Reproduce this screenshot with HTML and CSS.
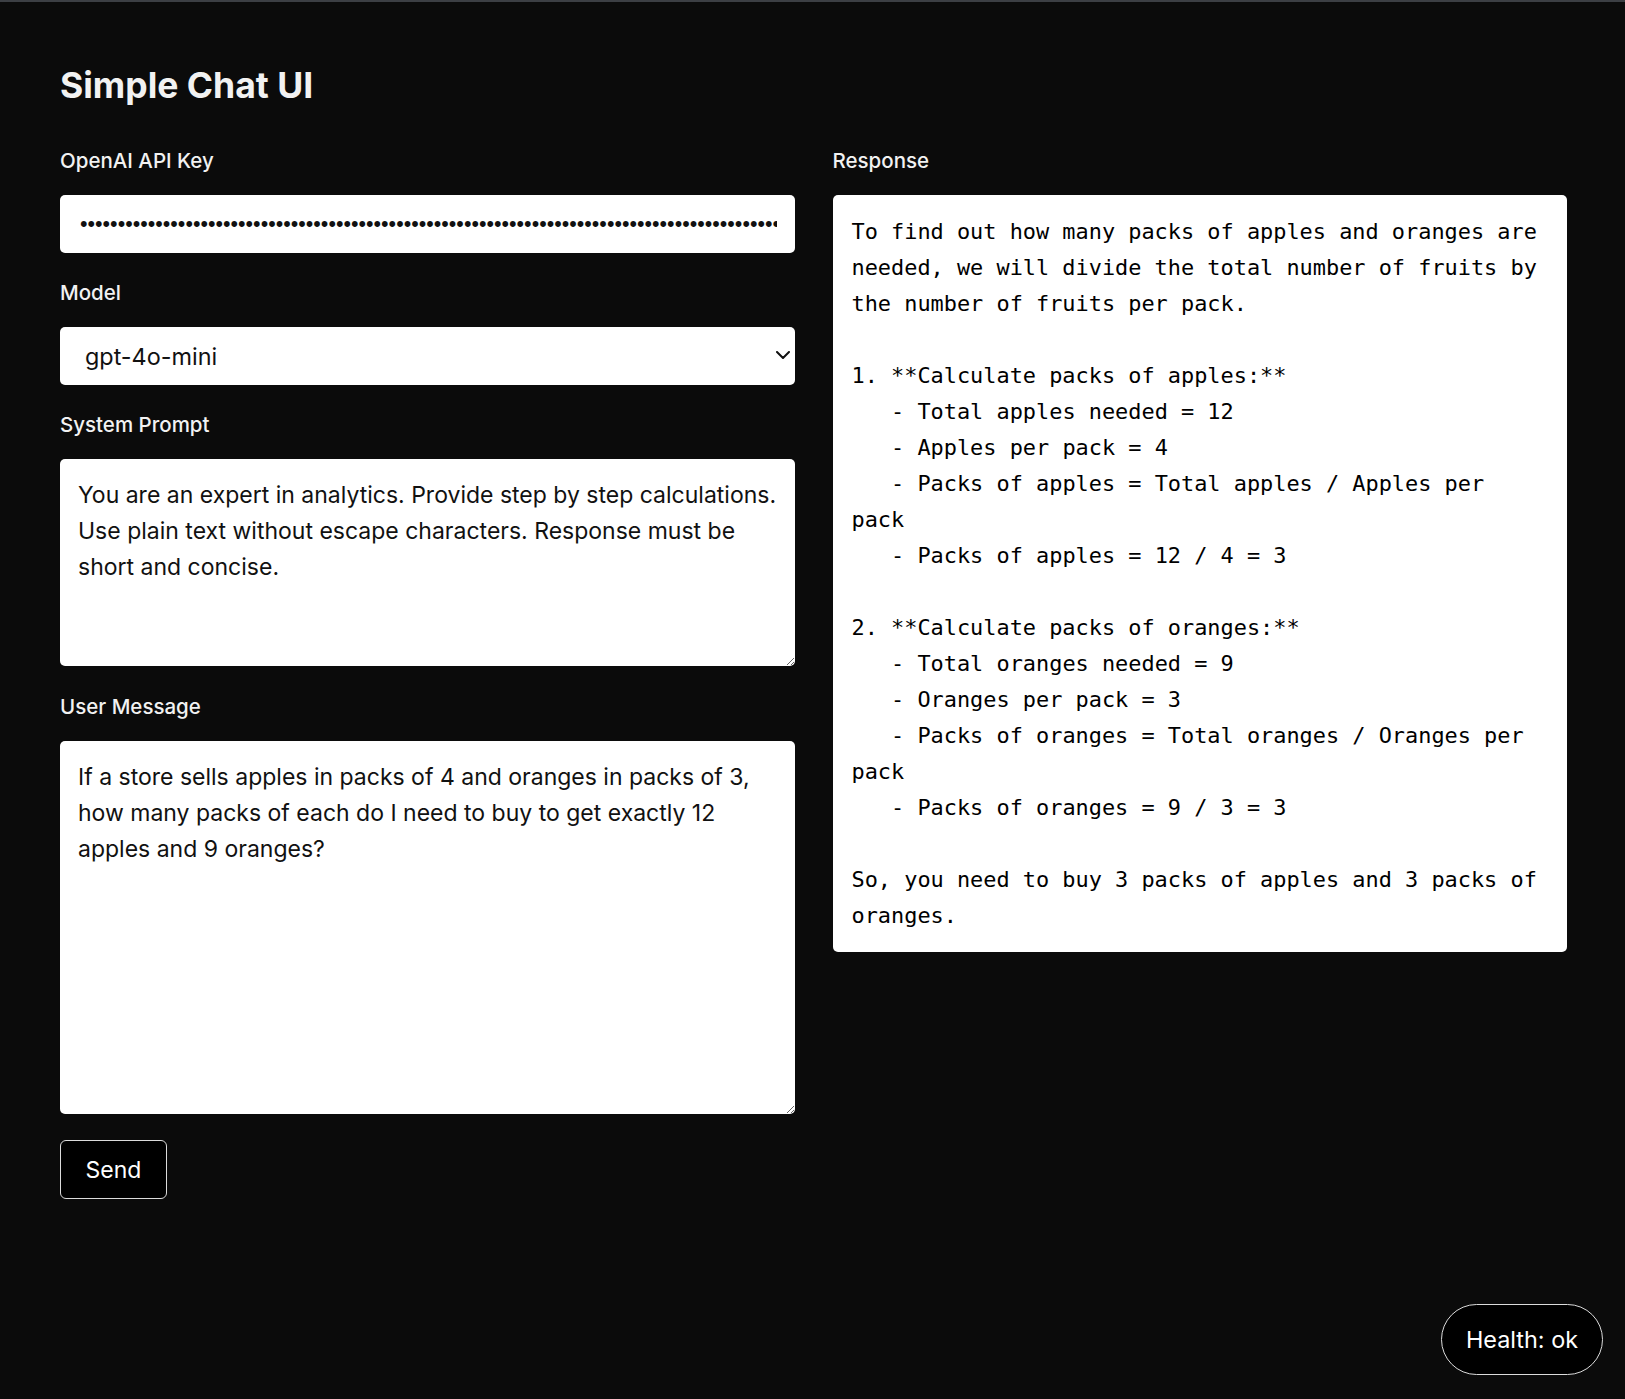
FILE: index.html
```html
<!DOCTYPE html>
<html lang="en">
<head>
<meta charset="utf-8">
<title>Simple Chat UI</title>
<link rel="stylesheet" href="styles.css">
</head>
<body>
<div class="topbar"></div>
<main class="page">
  <h1 class="title">Simple Chat UI</h1>
  <div class="columns">
    <section class="form">
      <label class="label" for="key">OpenAI API Key</label>
      <input class="field input" id="key" type="password" value="sk-proj-aaaaaaaaaaaaaaaaaaaaaaaaaaaaaaaaaaaaaaaaaaaaaaaaaaaaaaaaaaaaaaaaaaaaaaaaaaaaaaaaaaaaaaaaaaaaaaaaaaaaaaaaaaaaaaaaaaaaaaaa">
      <label class="label" for="model">Model</label>
      <div class="select-wrap">
        <select class="field select" id="model">
          <option>gpt-4o-mini</option>
          <option>gpt-4o</option>
        </select>
        <svg class="chevron" width="14" height="8" viewBox="0 0 14 8" aria-hidden="true">
          <path d="M1 1 L7 7 L13 1" fill="none" stroke="#111111" stroke-width="2" stroke-linecap="round" stroke-linejoin="round"/>
        </svg>
      </div>
      <label class="label" for="sys">System Prompt</label>
      <textarea class="field area area-sys" id="sys">You are an expert in analytics. Provide step by step calculations. Use plain text without escape characters. Response must be short and concise.</textarea>
      <label class="label" for="msg">User Message</label>
      <textarea class="field area area-msg" id="msg">If a store sells apples in packs of 4 and oranges in packs of 3, how many packs of each do I need to buy to get exactly 12 apples and 9 oranges?</textarea>
      <div class="actions"><button class="send" type="button">Send</button></div>
    </section>
    <section class="result">
      <div class="label">Response</div>
      <div class="response">To find out how many packs of apples and oranges are needed, we will divide the total number of fruits by the number of fruits per pack.

1. **Calculate packs of apples:**
   - Total apples needed = 12
   - Apples per pack = 4
   - Packs of apples = Total apples / Apples per pack
   - Packs of apples = 12 / 4 = 3

2. **Calculate packs of oranges:**
   - Total oranges needed = 9
   - Oranges per pack = 3
   - Packs of oranges = Total oranges / Oranges per pack
   - Packs of oranges = 9 / 3 = 3

So, you need to buy 3 packs of apples and 3 packs of oranges.</div>
    </section>
  </div>
</main>
<div class="health">Health: ok</div>
</body>
</html>
```
FILE: styles.css
```css
html, body {
  margin: 0;
  padding: 0;
}
body {
  background: #0b0b0b;
  color: #f2f2f2;
  font-family: Inter, "Liberation Sans", Arial, sans-serif;
  min-height: 1399px;
}
.topbar {
  height: 2px;
  background: #3c3f44;
}
.page {
  padding: 63px 58px 0 60px;
}
.title {
  margin: 0;
  font-size: 35.5px;
  line-height: 42px;
  font-weight: 700;
  color: #f2f2f2;
}
.columns {
  display: grid;
  grid-template-columns: 1fr 1fr;
  column-gap: 38px;
  margin-top: 42px;
  align-items: start;
}
.form {
  display: flex;
  flex-direction: column;
}
.label {
  display: block;
  font-size: 20.5px;
  line-height: 24px;
  font-weight: 500;
  color: #f2f2f2;
  margin-bottom: 22px;
}
.field {
  display: block;
  box-sizing: border-box;
  width: 100%;
  border: none;
  border-radius: 5px;
  background: #ffffff;
  color: #111111;
  font-family: Inter, "Liberation Sans", Arial, sans-serif;
  margin: 0 0 27px 0;
  outline: none;
}
.input {
  height: 58px;
  padding: 0 18px 0 20px;
  font-family: "Liberation Sans", Arial, sans-serif;
  font-size: 21.5px;
  margin-bottom: 28px;
}
.select-wrap {
  position: relative;
  margin-bottom: 28px;
}
.select {
  -webkit-appearance: none;
  appearance: none;
  height: 58px;
  padding: 0 40px 0 25px;
  font-size: 23.4px;
  margin: 0;
}
.chevron {
  position: absolute;
  right: 5px;
  top: 24px;
  pointer-events: none;
}
.area {
  padding: 18px 18px;
  font-size: 23px;
  line-height: 36px;
  resize: vertical;
}
.area-sys {
  height: 207px;
  margin-bottom: 29px;
}
.area-msg {
  height: 373px;
  margin-bottom: 26px;
}
.actions {
  display: flex;
}
.send {
  background: #000000;
  color: #ffffff;
  border: 1px solid #dcdcdc;
  border-radius: 6px;
  font-family: Inter, "Liberation Sans", Arial, sans-serif;
  font-size: 23px;
  line-height: 36px;
  padding: 10.5px 0;
  width: 107px;
  cursor: pointer;
}
.result {
  display: flex;
  flex-direction: column;
}
.response {
  background: #ffffff;
  color: #000000;
  border-radius: 5px;
  padding: 18.5px 19px;
  font-family: "DejaVu Sans Mono", "Liberation Mono", monospace;
  font-size: 21.9px;
  line-height: 36px;
  white-space: pre-wrap;
  word-wrap: break-word;
}
.health {
  position: fixed;
  right: 22px;
  bottom: 24px;
  box-sizing: border-box;
  width: 162px;
  height: 71px;
  display: flex;
  align-items: center;
  justify-content: center;
  background: #000000;
  color: #ffffff;
  border: 1px solid #dcdcdc;
  border-radius: 36px;
  font-size: 23.4px;
}
```
